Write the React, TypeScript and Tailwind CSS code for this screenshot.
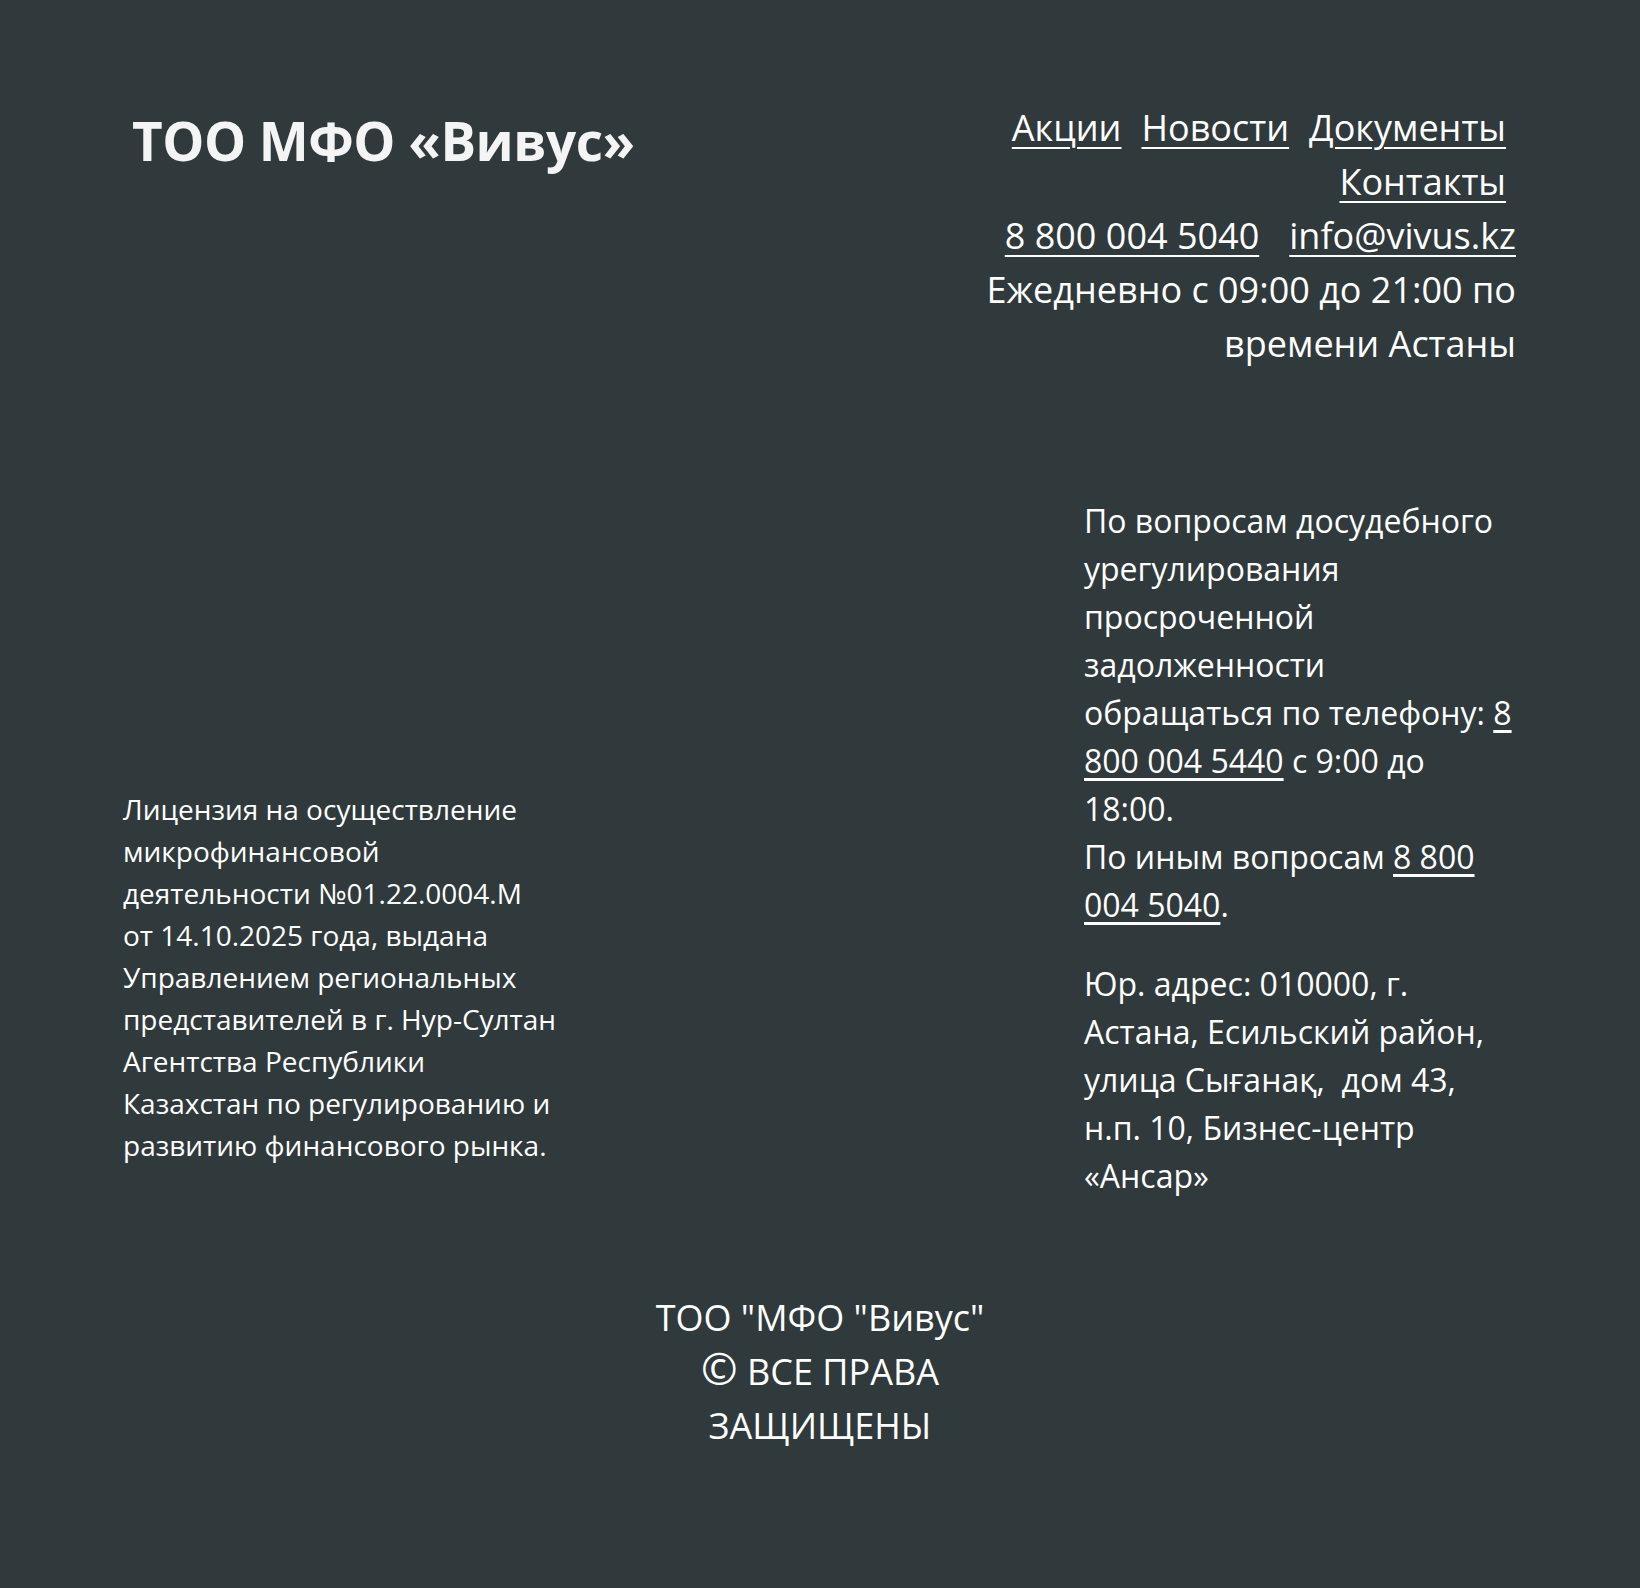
import React from "react";

const font = { fontFamily: '"Open Sans", "Noto Sans", sans-serif' };

export default function App() {
  return (
    <div
      className="min-h-screen bg-[#30393b] text-white px-[123px] pt-[101px] pb-[135px]"
      style={font}
    >
      {/* шапка */}
      <header className="flex justify-between items-start">
        <div className="mt-[13px] ml-[9px] text-[53px] leading-[53px] font-bold tracking-[-0.5px] text-[#f4f4f4]">
          ТОО МФО «Вивус»
        </div>

        <div className="w-[580px] mr-[1px] text-right text-[36px] leading-[54px]">
          <nav className="flex flex-wrap justify-end gap-x-[20px] pr-[10px]">
            <a href="#" className="underline underline-offset-[6px] decoration-[2px]">Акции</a>
            <a href="#" className="underline underline-offset-[6px] decoration-[2px]">Новости</a>
            <a href="#" className="underline underline-offset-[6px] decoration-[2px]">Документы</a>
            <a href="#" className="underline underline-offset-[6px] decoration-[2px]">Контакты</a>
          </nav>
          <div className="flex justify-end gap-x-[30px]">
            <a href="#" className="underline underline-offset-[6px] decoration-[2px]">8 800 004 5040</a>
            <a href="#" className="underline underline-offset-[6px] decoration-[2px]">info@vivus.kz</a>
          </div>
          <p>Ежедневно с 09:00 до 21:00 по времени Астаны</p>
        </div>
      </header>

      {/* основной блок */}
      <section className="flex justify-between items-end mt-[126px]">
        <p className="w-[436px] text-[28px] leading-[42px] mb-[34px]">
          Лицензия на осуществление микрофинансовой деятельности №01.22.0004.М
          от 14.10.2025 года, выдана Управлением региональных представителей в
          г. Нур-Султан Агентства Республики Казахстан по регулированию и
          развитию финансового рынка.
        </p>

        <div className="w-[433px] text-[32px] leading-[48px]">
          <p className="mb-[31px]">
            По вопросам досудебного урегулирования просроченной задолженности
            обращаться по телефону:{" "}
            <a href="#" className="underline underline-offset-[5px]">8 800 004 5440</a>{" "}
            с 9:00 до 18:00.
            <br />
            По иным вопросам{" "}
            <a href="#" className="underline underline-offset-[5px]">8 800 004 5040</a>.
          </p>
          <p>
            Юр. адрес: 010000, г. Астана, Есильский район, улица Сығанақ,&nbsp; дом 43,
            <br />
            н.п. 10, Бизнес-центр «Ансар»
          </p>
        </div>
      </section>

      {/* подвал */}
      <footer className="mt-[91px] mx-auto w-[345px] text-center text-[36px] leading-[54px]">
        ТОО "МФО "Вивус" <span className="text-[44px] leading-[0]">©</span> ВСЕ ПРАВА ЗАЩИЩЕНЫ
      </footer>
    </div>
  );
}
